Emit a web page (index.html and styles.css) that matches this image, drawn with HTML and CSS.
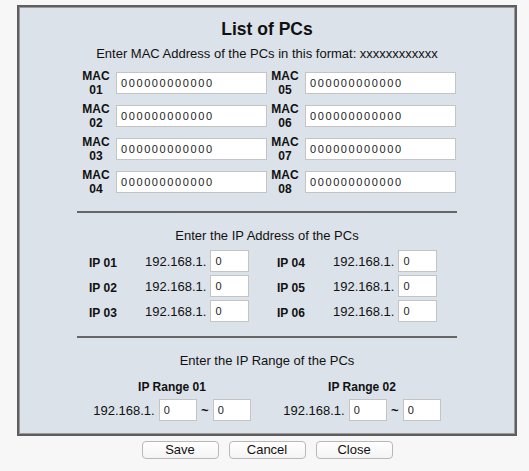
FILE: index.html
```html
<!doctype html>
<html>
<head>
<meta charset="utf-8">
<title>List of PCs</title>
<link rel="stylesheet" href="styles.css">
</head>

<body>

<div class="wrap">
	<div class="panel">
		<h1 class="title">List of PCs</h1>
		<p class="note">Enter MAC Address of the PCs in this format: xxxxxxxxxxxx</p>
		<div class="inner">
			<div class="mac-grid">
				<div class="mac-row"><label>MAC<br>01</label><input type="text" class="mac" value="000000000000"></div>
				<div class="mac-row"><label>MAC<br>02</label><input type="text" class="mac" value="000000000000"></div>
				<div class="mac-row"><label>MAC<br>03</label><input type="text" class="mac" value="000000000000"></div>
				<div class="mac-row"><label>MAC<br>04</label><input type="text" class="mac" value="000000000000"></div>
				<div class="mac-row"><label>MAC<br>05</label><input type="text" class="mac" value="000000000000"></div>
				<div class="mac-row"><label>MAC<br>06</label><input type="text" class="mac" value="000000000000"></div>
				<div class="mac-row"><label>MAC<br>07</label><input type="text" class="mac" value="000000000000"></div>
				<div class="mac-row"><label>MAC<br>08</label><input type="text" class="mac" value="000000000000"></div>
			</div>

			<div class="rule"></div>

			<p class="note sect">Enter the IP Address of the PCs</p>
			<div class="ip-grid">
				<div class="ip-row"><label>IP 01</label><span>192.168.1.</span><input type="text" class="ip" value="0"></div>
				<div class="ip-row"><label>IP 02</label><span>192.168.1.</span><input type="text" class="ip" value="0"></div>
				<div class="ip-row"><label>IP 03</label><span>192.168.1.</span><input type="text" class="ip" value="0"></div>
				<div class="ip-row"><label>IP 04</label><span>192.168.1.</span><input type="text" class="ip" value="0"></div>
				<div class="ip-row"><label>IP 05</label><span>192.168.1.</span><input type="text" class="ip" value="0"></div>
				<div class="ip-row"><label>IP 06</label><span>192.168.1.</span><input type="text" class="ip" value="0"></div>
			</div>

			<div class="rule rule2"></div>

			<p class="note sect">Enter the IP Range of the PCs</p>
			<div class="range-grid">
				<div class="range">
					<label>IP Range 01</label>
					<div class="range-row"><span>192.168.1.</span><input type="text" class="rg" value="0"><em>~</em><input type="text" class="rg" value="0"></div>
				</div>
				<div class="range">
					<label>IP Range 02</label>
					<div class="range-row"><span>192.168.1.</span><input type="text" class="rg" value="0"><em>~</em><input type="text" class="rg" value="0"></div>
				</div>
			</div>
		</div>
	</div>

	<div class="buttons">
		<button type="button">Save</button>
		<button type="button">Cancel</button>
		<button type="button">Close</button>
	</div>
</div>

</body>
</html>
```

FILE: styles.css
```css
* { padding: 0; margin: 0; box-sizing: border-box; }

body {
	background: #f7f7f7;
	font-family: "Liberation Sans", Arial, sans-serif;
	font-size: 13px;
	color: #111;
}

.wrap {
	width: 500px;
	margin: 5px 0 0 17px;
}

.panel {
	background: #dbe2e9;
	border: 2px solid #5e5e5e;
	box-shadow: inset 0 0 0 1px #9a9a9a;
	padding: 11px 0 13px;
}

.title {
	font-size: 17.5px;
	line-height: 22px;
	text-align: center;
}

.note {
	font-size: 13px;
	line-height: 14px;
	text-align: center;
	margin-top: 7px;
}
.note.sect { margin-top: 16px; }

.inner {
	width: 380px;
	margin: 0 auto;
}

input {
	font-family: "Liberation Sans", Arial, sans-serif;
	font-size: 11px;
	color: #222;
	background: #fff;
	border: 1px solid #c4c4c4;
	height: 22px;
	padding: 0 0 0 4px;
	outline: none;
}

/* MAC block */
.mac-grid {
	display: grid;
	grid-template-columns: 187px 187px;
	grid-template-rows: repeat(4, 28px);
	grid-auto-flow: column;
	column-gap: 2px;
	row-gap: 5px;
	margin: 8px 0 0 3px;
}
.mac-row {
	display: flex;
	align-items: center;
	gap: 4px;
}
.mac-row label {
	width: 32px;
	font-size: 12px;
	font-weight: bold;
	line-height: 14px;
	text-align: center;
}
.mac {
	width: 151px;
	letter-spacing: 1.6px;
}

.rule {
	height: 2px;
	background: #666;
	margin-top: 15px;
}
.rule2 { margin-top: 14px; }

/* IP block */
.ip-grid {
	display: grid;
	grid-template-columns: 188px 188px;
	grid-template-rows: repeat(3, 22px);
	grid-auto-flow: column;
	row-gap: 3px;
	margin: 7px 0 0 12px;
}
.ip-row {
	display: flex;
	align-items: center;
}
.ip-row label {
	width: 56px;
	font-size: 12px;
	font-weight: bold;
	padding-top: 3px;
}
.ip-row span { margin-right: 4px; }
.ip { width: 39px; }

/* range block */
.range-grid {
	display: grid;
	grid-template-columns: 190px 190px;
	margin-top: 12px;
}
.range {
	display: flex;
	flex-direction: column;
	align-items: center;
}
.range label {
	font-size: 12px;
	font-weight: bold;
	line-height: 14px;
}
.range-row {
	display: flex;
	align-items: center;
	margin-top: 5px;
}
.range-row span { margin-right: 4px; }
.range-row em {
	font-style: normal;
	font-weight: bold;
	width: 16px;
	text-align: center;
}
.rg { width: 38px; }

.buttons {
	display: flex;
	justify-content: center;
	gap: 10px;
	margin-top: 5px;
}
.buttons button {
	width: 77px;
	height: 18px;
	font-family: "Liberation Sans", Arial, sans-serif;
	font-size: 13px;
	line-height: 16px;
	color: #111;
	background: linear-gradient(#fff, #f4f4f4);
	border: 1px solid #b8b8b8;
	border-radius: 4px;
}
```
